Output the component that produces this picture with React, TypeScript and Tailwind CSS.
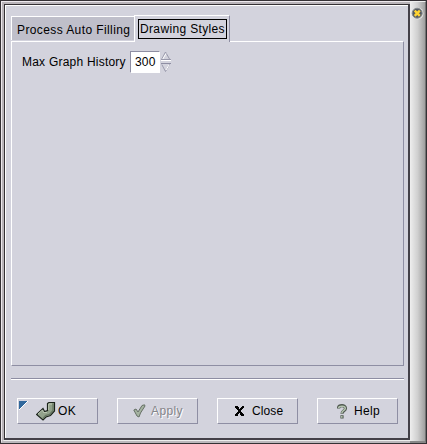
import type { ReactNode } from "react";

function Label({ children, className = "" }: { children: ReactNode; className?: string }) {
  return <span className={`block whitespace-nowrap leading-[14px] ${className}`}>{children}</span>;
}

function PushButton({ children, className = "" }: { children: ReactNode; className?: string }) {
  return (
    <button
      className={`relative flex h-[26px] w-[81px] items-center border border-t-white border-l-white border-r-[#8e8ea3] border-b-[#8e8ea3] ${className}`}
    >
      {children}
    </button>
  );
}

function OkIcon() {
  return (
    <svg className="block" width="20" height="19" viewBox="0 0 20 19">
      <path d="M11.5 1.5L13 .5H18.5V9L14.5 13.5L10 15L7 18L.5 12.5L7 6.5L8.5 9.5L11.5 8.5Z" fill="#92a28b" stroke="#1b231b" strokeWidth="1.2" />
      <path d="M17 1.5V8.5L13.5 12.5L9.5 13.5L7 16.5" fill="none" stroke="#687863" strokeWidth="1.3" />
      <path d="M12.7 8V2H16M2 12L6.5 8L7.5 10.5H11" fill="none" stroke="#bac6b1" />
    </svg>
  );
}

function CheckIcon() {
  return (
    <svg width="13" height="14" viewBox="0 0 13 14">
      <path d="M.8 6L3 5L5 8L9 1.5L11.5 .8L12 2L7.5 9L6 13L4 12Z" fill="#a5b3a1" stroke="#667066" />
    </svg>
  );
}

function CloseIcon() {
  return (
    <svg width="10" height="11" viewBox="0 0 10 11" shapeRendering="crispEdges">
      <path d="M0 0H3V1H4V3H5V2H6V1H7V0H9V2H8V3H7V4H6V6H7V7H8V8H9V10H6V9H5V7H4V8H3V10H0V8H1V7H2V6H3V4H2V3H1V2H0Z" fill="#000" />
    </svg>
  );
}

function HelpIcon() {
  return (
    <svg width="11" height="15" viewBox="0 0 11 15" fill="none">
      <path d="M1.5 4.5C1.5 .8 8.5 .8 8.5 4.3C8.5 7 5 6.5 5 9.8M5 11.3V14.5" stroke="#505950" strokeWidth="3.2" />
      <path d="M1.5 4C2.2 1.5 8.3 1.5 8.3 4.3C8.3 6.5 4.8 6.5 4.8 9.3M4.8 12V13.7" stroke="#b4c4b0" strokeWidth="1.5" />
    </svg>
  );
}

function WindowClose() {
  return (
    <svg width="13" height="13" viewBox="0 0 13 13">
      <circle cx="6.5" cy="6.5" r="6" fill="#e4e4df" />
      <circle cx="6.2" cy="6.2" r="5" fill="#555b63" stroke="#858a8e" />
      <path d="M3.7 3.7L8.8 8.8M8.8 3.7L3.7 8.8" stroke="#ffd432" strokeWidth="2.4" />
    </svg>
  );
}

export default function App() {
  return (
    <div className="flex h-[444px] w-[427px] border border-[#353135] bg-[#d3d3dd] font-['Liberation_Sans',Arial,sans-serif] text-[12px] text-black">
      <div className="h-[442px] w-[409px] border-t border-l border-b-2 border-t-[#eee9ee] border-l-[#eee9ee] border-b-[#bcb8bc]">
        <div className="h-[439px] w-[408px] border-t-2 border-l-2 border-b border-t-[#b9b4b9] border-l-[#b9b4b9] border-b-[#eeeeee]">
          <div className="h-[436px] w-[406px] border-t border-r-2 border-b-2 border-l border-t-[#353135] border-r-[#434048] border-b-[#434048] border-l-[#353135]">
            <div className="flex h-[433px] w-[403px] flex-col border-t border-l border-white bg-[#d3d3dd] pt-[9px] pl-[5px]">
              <div className="z-10 flex h-[26px] items-end">
                <div className="mb-px h-[24px] w-[123px] border-t border-l border-white bg-[#bfbfca] pt-[6px] pl-[5px]">
                  <Label className="tracking-[0.4px]">Process Auto Filling</Label>
                </div>
                <div className="mb-[-1px] h-[27px] w-[96px] border-t border-r border-l border-t-white border-r-[#8e8ea3] border-l-white bg-[#d3d3dd] pt-[3px] pl-[3px]">
                  <div className="h-5 w-[89px] border border-black pt-[2px] pl-px">
                    <Label className="tracking-[0.35px]">Drawing Styles</Label>
                  </div>
                </div>
              </div>
              <div className="flex h-[325px] w-[393px] items-start border border-t-white border-r-[#8e8ea3] border-b-[#8e8ea3] border-l-white pt-[9px] pl-[10px]">
                <Label className="mt-[4px] w-[108px] tracking-[0.22px]">Max Graph History</Label>
                <div className="h-[22px] w-[30px] border border-t-[#8e8ea3] border-r-white border-b-white border-l-[#8e8ea3] bg-white pt-[3px] pl-[4px]">
                  <Label className="tracking-[0.2px]">300</Label>
                </div>
                <svg className="ml-px shrink-0" width="10" height="22" viewBox="0 0 10 22" fill="none">
                  <path d="M.8 8L4.5 1L8.5 8M.8 13.5L4.5 20.5L8.5 13.5" stroke="#9a9aac" />
                  <path d="M1.8 8L5 2.5M5 19L8 14" stroke="#fff" />
                  <path d="M0 8.5H10" stroke="#9a9aac" />
                  <path d="M0 9.5H10" stroke="#fff" />
                  <path d="M0 12.5H10" stroke="#8e8ea3" />
                </svg>
              </div>
              <div className="mt-[12px] h-[2px] w-[393px] border-t border-b border-t-[#8e8ea3] border-b-white" />
              <div className="mt-[18px] ml-[6px] flex gap-[19px]">
                <PushButton>
                  <svg className="absolute top-[2px] left-px" width="10" height="10" viewBox="0 0 10 10">
                    <path d="M0 0H9L0 9Z" fill="#31689c" />
                    <path d="M9 0L0 9" stroke="#fff" />
                  </svg>
                  <span className="ml-[18px]"><OkIcon /></span>
                  <Label className="ml-[2px] tracking-[0.3px]">OK</Label>
                </PushButton>
                <PushButton>
                  <span className="ml-[15px]"><CheckIcon /></span>
                  <Label className="ml-[5px] tracking-[0.4px] text-[#85858a] [text-shadow:1px_1px_0_#fff]">Apply</Label>
                </PushButton>
                <PushButton>
                  <span className="ml-[17px]"><CloseIcon /></span>
                  <Label className="ml-[7px] tracking-[0.1px]">Close</Label>
                </PushButton>
                <PushButton>
                  <span className="ml-[19px]"><HelpIcon /></span>
                  <Label className="ml-[6px] tracking-[0.3px]">Help</Label>
                </PushButton>
              </div>
            </div>
          </div>
        </div>
      </div>
      <div className="flex h-[442px] w-4 justify-center border-t border-r border-b-2 border-t-[#eee] border-r-[#737373] border-b-[#888] bg-linear-to-r from-[#eeeeee] via-[#d0d0d0] to-[#a0a0a0] pt-[5px]">
        <WindowClose />
      </div>
    </div>
  );
}
